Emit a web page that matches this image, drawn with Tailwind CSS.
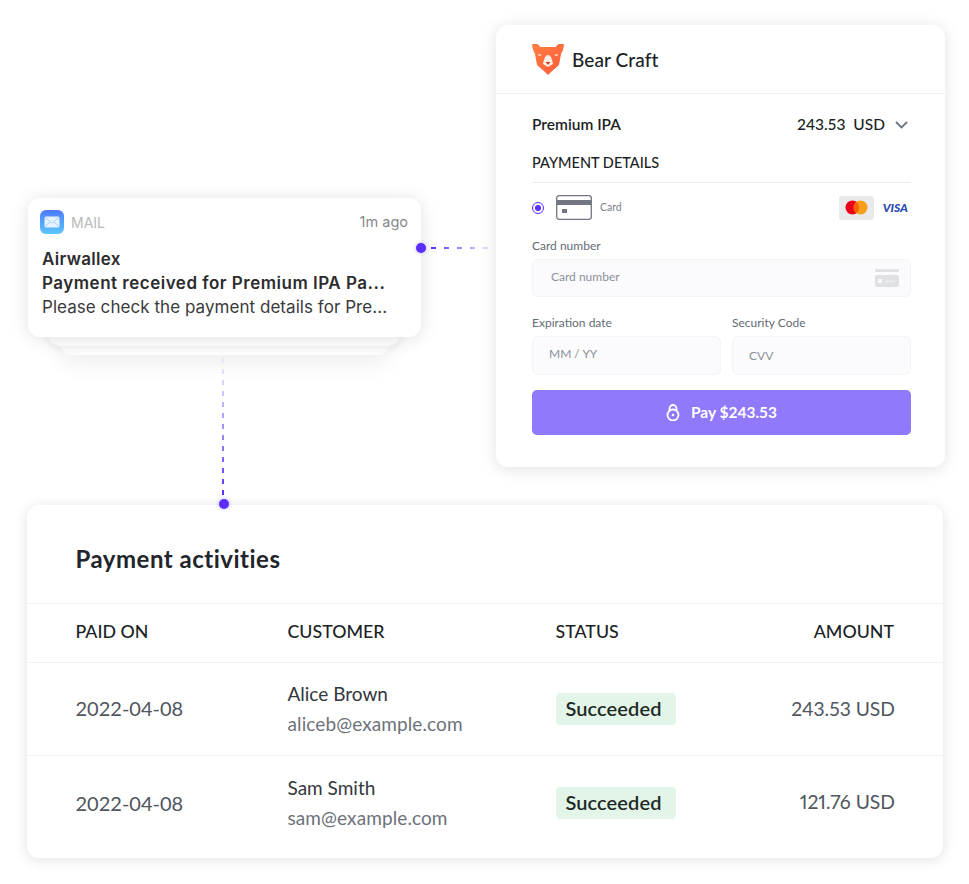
<!DOCTYPE html>
<html lang="en">
  <head>
    <meta charset="UTF-8" />
    <title>Payment activities</title>
    <script src="https://cdn.jsdelivr.net/npm/@tailwindcss/browser@4"></script>
  </head>
  <body class="bg-white overflow-hidden font-['Lato','Liberation_Sans',sans-serif] text-[#1b1f26]">
    <div class="relative w-[969px] h-[884px] pt-[25px]">

      <!-- Top row -->
      <div class="flex items-start h-[442px]">

        <!-- Notification -->
        <div class="relative ml-[28px] mt-[173px] w-[393px]">
          <div class="absolute left-[32px] right-[31px] -bottom-[18px] h-[40px] rounded-[12px] bg-white shadow-[0_8px_22px_rgba(0,0,0,0.07)]"></div>
          <div class="absolute left-[20px] right-[21px] -bottom-[9px] h-[40px] rounded-[12px] bg-white shadow-[0_3px_10px_rgba(0,0,0,0.06)]"></div>
          <div class="relative h-[139px] rounded-[12px] bg-white pl-[12px] pr-[13px] pt-[12px] shadow-[0_2px_18px_rgba(0,0,0,0.12)] font-['Inter',sans-serif]">
            <div class="flex items-center h-[24px]">
              <div class="w-[24px] h-[24px] rounded-[6px] bg-gradient-to-b from-[#4f78fb] to-[#5cc8fd] flex items-center justify-center">
                <svg width="16" height="12" viewBox="0 0 16 12">
                  <rect x="0.5" y="0.5" width="15" height="11" rx="1.5" fill="#e6f2ff" />
                  <path d="M1 1.5 8 7l7-5.5M1 10.5l5-4.5M15 10.5l-5-4.5" fill="none" stroke="#9cc4fb" stroke-width="0.8" />
                </svg>
              </div>
              <span class="ml-[7px] text-[14px] text-[#b9b9bb]">MAIL</span>
              <span class="ml-auto text-[14.500px] text-[#87878a]">1m ago</span>
            </div>
            <div class="mt-[12px] ml-[2px] text-[#2c2c2e] text-[17px] leading-[24.500px]">
              <div class="font-semibold tracking-[0.3px] pt-[1px] -mb-[1px]">Airwallex</div>
              <div class="font-semibold tracking-[0.5px]">Payment received for Premium IPA Pa...</div>
              <div class="text-[#3a3a3c] tracking-[0.05px]">Please check the payment details for Pre...</div>
            </div>
          </div>
        </div>

        <!-- Payment card -->
        <div class="ml-[75px] w-[449px] h-[442px] rounded-[12px] bg-white shadow-[0_2px_16px_rgba(0,0,0,0.12)]">
          <div class="flex items-center h-[69px] pl-[35px] border-b border-[#f0f0f2]">
            <svg width="34" height="33" viewBox="0 0 34 33">
              <defs>
                <linearGradient id="bear" x1="0" y1="0" x2="1" y2="1">
                  <stop offset="0" stop-color="#ff7f3f" />
                  <stop offset="1" stop-color="#ff5a3c" />
                </linearGradient>
              </defs>
              <path d="M1.500 1.500h5l3 3h15l3-3h5l-1 5.500-2 4-2 11-7 6-3.500 3.500-3.500-3.500-7-6-2-11-2-4z" fill="url(#bear)" stroke="url(#bear)" stroke-linejoin="round" />
              <path d="M7 11l4 1-3 1zM27 11l-4 1 3 1z" fill="#fff" />
              <path d="M17 12c3 0 4 4 5 9l-5 3-5-3c1-5 2-9 5-9z" fill="#ffeee6" />
              <path d="M14.500 19h5L17 22z" fill="#c9452a" />
            </svg>
            <span class="ml-[7px] pt-[3px] text-[19px] font-medium tracking-[0.1px]">Bear Craft</span>
          </div>

          <div class="pl-[36px] pr-[34px]">
            <div class="flex items-center h-[60px] pt-[1px] text-[15.500px] font-semibold">
              <span>Premium IPA</span>
              <span class="ml-auto font-medium text-[15.500px]">243.53&nbsp; USD</span>
              <svg class="ml-[10px] mr-[3px]" width="13" height="8" viewBox="0 0 13 8">
                <path d="M1 1l5.5 5.500L12 1" fill="none" stroke="#6c7480" stroke-width="1.800" />
              </svg>
            </div>
            <div class="h-[29px] text-[14.500px] font-medium border-b border-[#ececee] leading-[18px]">PAYMENT DETAILS</div>

            <div class="flex items-center h-[50px] pb-[1px]">
              <div class="w-[12px] h-[12px] rounded-full border-[1.500px] border-[#5b2eff] flex items-center justify-center">
                <div class="w-[6px] h-[6px] rounded-full bg-[#5b2eff]"></div>
              </div>
              <svg class="ml-[12px]" width="36" height="25" viewBox="0 0 36 25">
                <rect x="0.700" y="0.700" width="34.600" height="23.600" rx="2.500" fill="#fff" stroke="#717680" stroke-width="1.300" />
                <rect x="1" y="5" width="34" height="5" fill="#717680" />
                <rect x="6" y="14" width="5" height="4" fill="#717680" />
              </svg>
              <span class="ml-[8px] text-[10.500px] text-[#7b808a]">Card</span>
              <div class="ml-auto w-[35px] h-[24px] rounded-[3px] bg-[#e9eaec] flex items-center justify-center">
                <svg width="23" height="15" viewBox="0 0 23 15">
                  <circle cx="7.500" cy="7.500" r="7" fill="#eb001b" />
                  <circle cx="15.500" cy="7.500" r="7" fill="#f79e1b" />
                  <path d="M11.500 2a7 7 0 0 1 0 11 7 7 0 0 1 0-11z" fill="#ff5f00" />
                </svg>
              </div>
              <span class="ml-[9px] mr-[3px] text-[12px] font-black italic text-[#2a4bae]">VISA</span>
            </div>

            <div class="mt-[5px] text-[12px] leading-[16px] text-[#666b75]">Card number</div>
            <div class="mt-[5px] flex items-center h-[38px] pl-[18px] pr-[11px] pb-[3px] rounded-[6px] border border-[#f3f4f6] bg-[#fbfbfd] text-[12px] text-[#8b909a]">
              Card number
              <svg class="ml-auto mt-[3px]" width="24" height="18" viewBox="0 0 24 18">
                <rect x="0" y="0" width="24" height="3" rx="1" fill="#dfe1e5" />
                <rect x="0" y="6" width="24" height="12" rx="2" fill="#dfe1e5" />
                <rect x="3" y="10" width="4" height="4" fill="#fafafc" />
                <rect x="10" y="11.500" width="10" height="1.500" fill="#eceef0" />
              </svg>
            </div>

            <div class="mt-[18px] flex gap-[11px]">
              <div class="w-[189px]">
                <div class="text-[12px] leading-[16px] text-[#666b75]">Expiration date</div>
                <div class="mt-[5px] flex items-center h-[39px] pl-[16px] pb-[3px] rounded-[6px] border border-[#f3f4f6] bg-[#fbfbfd] text-[12px] text-[#8b909a]">MM / YY</div>
              </div>
              <div class="w-[179px]">
                <div class="text-[12px] leading-[16px] text-[#666b75]">Security Code</div>
                <div class="mt-[5px] flex items-center h-[39px] pl-[16px] rounded-[6px] border border-[#f3f4f6] bg-[#fbfbfd] text-[12px] text-[#8b909a]">CVV</div>
              </div>
            </div>

            <div class="mt-[15px] flex items-center justify-center w-[379px] h-[45px] rounded-[5px] bg-[#9079fb] text-white text-[15.500px] font-bold">
              <svg class="mr-[11px]" width="14" height="17" viewBox="0 0 14 17">
                <circle cx="7" cy="11" r="5.500" fill="none" stroke="#fff" stroke-width="1.800" />
                <path d="M3.500 7V4.500a3.500 3.500 0 0 1 7 0V7" fill="none" stroke="#fff" stroke-width="1.800" />
                <circle cx="7" cy="11" r="1.300" fill="#fff" />
              </svg>
              Pay $243.53
            </div>
          </div>
        </div>
      </div>

      <!-- Table card -->
      <div class="ml-[27px] mt-[38px] w-[916px] h-[353px] rounded-[12px] bg-white shadow-[0_2px_14px_rgba(0,0,0,0.12)]">
        <div class="flex items-center h-[99px] pl-[48.500px] pt-[10px] text-[24px] tracking-[0.5px] font-bold text-[#22252b] border-b border-[#f3f3f5]">Payment activities</div>
        <div class="grid grid-cols-[212px_268px_1fr_auto] items-center h-[59px] pb-[4px] pl-[48.500px] pr-[49px] text-[17.800px] font-medium border-b border-[#f3f3f5]">
          <span>PAID ON</span>
          <span>CUSTOMER</span>
          <span>STATUS</span>
          <span>AMOUNT</span>
        </div>
        <div class="grid grid-cols-[212px_268px_1fr_auto] items-center h-[93px] pl-[48.500px] pr-[48px] border-b border-[#f3f3f5]">
          <span class="text-[20px] text-[#50555e] pb-[2px]">2022-04-08</span>
          <div>
            <div class="text-[19px] leading-[30px] text-[#33373e]">Alice Brown</div>
            <div class="text-[19px] leading-[30px] tracking-[0.1px] text-[#6d727b]">aliceb@example.com</div>
          </div>
          <span class="w-[120px] h-[32px] rounded-[4px] bg-[#e2f5e8] flex items-center justify-center pr-[4px] pb-[2px] text-[20px] font-semibold tracking-[0.1px] text-[#1f2a26]">Succeeded</span>
          <span class="text-[19.300px] text-[#50555e] proportional-nums">243.53 USD</span>
        </div>
        <div class="grid grid-cols-[212px_268px_1fr_auto] items-center h-[93px] pl-[48.500px] pr-[48px]">
          <span class="text-[20px] text-[#50555e]">2022-04-08</span>
          <div>
            <div class="text-[19px] leading-[30px] text-[#33373e]">Sam Smith</div>
            <div class="text-[19px] leading-[30px] tracking-[0.1px] text-[#6d727b]">sam@example.com</div>
          </div>
          <span class="w-[120px] h-[32px] rounded-[4px] bg-[#e2f5e8] flex items-center justify-center pr-[4px] pb-[2px] text-[20px] font-semibold tracking-[0.1px] text-[#1f2a26]">Succeeded</span>
          <span class="text-[19.300px] text-[#50555e] proportional-nums">121.76 USD</span>
        </div>
      </div>

      <!-- Connectors -->
      <div class="absolute left-[416px] top-[243px] w-[10px] h-[10px] rounded-full bg-[#5b2eff] shadow-[0_0_4px_rgba(91,46,255,0.35)]"></div>
      <svg class="absolute left-[431px] top-[246px]" width="65" height="4" viewBox="0 0 65 4">
        <defs>
          <linearGradient id="fadeH" gradientUnits="userSpaceOnUse" x1="0" y1="0" x2="65" y2="0">
            <stop offset="0" stop-color="#5b2eff" />
            <stop offset="1" stop-color="#5b2eff" stop-opacity="0.05" />
          </linearGradient>
        </defs>
        <line x1="0" y1="2" x2="65" y2="2" stroke="url(#fadeH)" stroke-width="2" stroke-dasharray="5 8" />
      </svg>
      <div class="absolute left-[219px] top-[499px] w-[10px] h-[10px] rounded-full bg-[#5b2eff] shadow-[0_0_4px_rgba(91,46,255,0.35)]"></div>
      <svg class="absolute left-[221px] top-[355px]" width="4" height="140" viewBox="0 0 4 140">
        <defs>
          <linearGradient id="fadeV" gradientUnits="userSpaceOnUse" x1="0" y1="140" x2="0" y2="0">
            <stop offset="0" stop-color="#5b2eff" />
            <stop offset="1" stop-color="#5b2eff" stop-opacity="0.03" />
          </linearGradient>
        </defs>
        <line x1="2" y1="140" x2="2" y2="0" stroke="url(#fadeV)" stroke-width="2" stroke-dasharray="5 6" />
      </svg>
    </div>
  </body>
</html>
